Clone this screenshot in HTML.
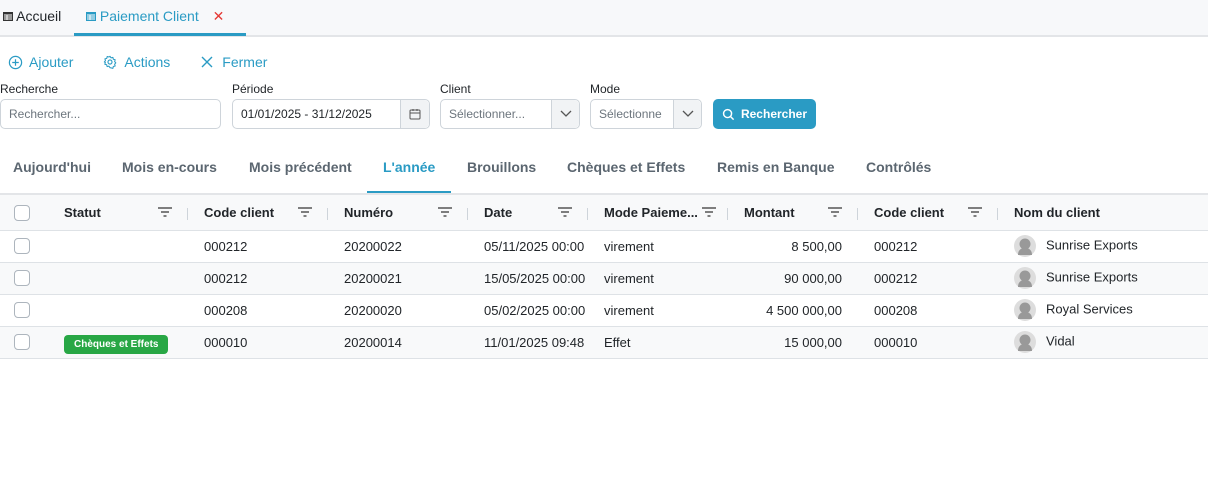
<!DOCTYPE html>
<html><head><meta charset="utf-8"><style>
*{box-sizing:border-box;margin:0;padding:0}
body{width:1208px;height:478px;background:#fff;font-family:"Liberation Sans",Arial,sans-serif;color:#212529;position:relative;overflow:hidden}
.abs{position:absolute}
.tabbar{left:0;top:0;width:1208px;height:37px;background:#f7f8fa;border-bottom:2px solid #e3e5e8}
.blue{color:#2a9bc4}
.lbl{font-size:12px;color:#212529}
.inp{height:30px;border:1px solid #ced4da;border-radius:5px;background:#fff;font-size:12px;display:flex;align-items:center;padding-left:8px;color:#6c757d}
.addon{position:absolute;top:0;right:0;height:28px;border-left:1px solid #ced4da;background:#f1f3f5;display:flex;align-items:center;justify-content:center;border-radius:0 5px 5px 0}
.tab2{font-size:14px;font-weight:bold;color:#5b6670;top:159px}
table{position:absolute;left:0;top:193px;width:1208px;border-collapse:collapse;font-family:"Liberation Sans",sans-serif;font-size:13px;white-space:nowrap}
th{height:36px;background:#f8f9fa;text-align:left;font-weight:bold;font-size:13px;border-bottom:1px solid #dee2e6;border-top:2px solid #e3e5e8;position:relative;padding-left:14px}
td{height:32px;border-bottom:1px solid #dee2e6;padding-left:14px;font-size:13px}
tr.alt td{background:#f8f9fa}
.cb{width:16px;height:16px;border:1px solid #adb5bd;border-radius:4px;background:#fff;display:inline-block;vertical-align:middle}
.f{position:absolute;right:18px;top:12px}
.sep{position:absolute;right:2px;top:13px;width:1px;height:12px;background:#ced4da}
.av{display:inline-block;width:22px;height:22px;vertical-align:middle;margin-right:10px}
.badge{background:#28a745;color:#fff;font-size:10px;font-weight:bold;padding:4px 10px;border-radius:4px}
</style></head><body>
<div class="abs tabbar"></div>
<div class="abs" style="left:3px;top:8px;font-size:14px">
<svg width="10" height="9" style="vertical-align:0"><rect x="0" y="0" width="10" height="9" fill="#333"/><path d="M1 3h8M1 5h8M1 7h8M4 3v5" stroke="#fff" stroke-width="1"/></svg> Accueil</div>
<div class="abs blue" style="left:86px;top:8px;font-size:14px">
<svg width="10" height="9" style="vertical-align:0"><rect x="0" y="0" width="10" height="9" fill="#2a9bc4"/><path d="M1 3h8M1 5h8M1 7h8M4 3v5" stroke="#fff" stroke-width="1"/></svg> Paiement Client <span style="color:#e53935;margin-left:10px">✕</span></div>
<div class="abs" style="left:74px;top:33px;width:172px;height:3px;background:#2a9bc4"></div>

<div class="abs blue" style="left:8px;top:54px;font-size:14px;display:flex;align-items:center">
<svg width="15" height="15" viewBox="0 0 16 16"><circle cx="8" cy="8" r="6.5" fill="none" stroke="#2a9bc4" stroke-width="1.3"/><path d="M8 4.5v7M4.5 8h7" stroke="#2a9bc4" stroke-width="1.3"/></svg><span style="margin-left:6px">Ajouter</span>
<svg style="margin-left:30px" width="14" height="14" viewBox="0 0 16 16"><circle cx="8" cy="8" r="2.3" fill="none" stroke="#2a9bc4" stroke-width="1.3"/><path d="M8 1.5l1.2 1.8 2.1-.6.5 2.1 2.1.6-.6 2.1 1.3 1.5-1.3 1.5.6 2.1-2.1.6-.5 2.1-2.1-.6L8 14.5l-1.2-1.8-2.1.6-.5-2.1-2.1-.6.6-2.1L1.5 8l1.3-1.5-.6-2.1 2.1-.6.5-2.1 2.1.6z" fill="none" stroke="#2a9bc4" stroke-width="1.2" stroke-linejoin="round"/></svg><span style="margin-left:7px">Actions</span>
<svg style="margin-left:30px" width="14" height="14" viewBox="0 0 14 14"><path d="M2 2l10 10M12 2L2 12" stroke="#2a9bc4" stroke-width="1.4"/></svg><span style="margin-left:8px">Fermer</span></div>

<div class="abs lbl" style="left:0;top:82px">Recherche</div>
<div class="abs lbl" style="left:232px;top:82px">Période</div>
<div class="abs lbl" style="left:440px;top:82px">Client</div>
<div class="abs lbl" style="left:590px;top:82px">Mode</div>
<div class="abs inp" style="left:0;top:99px;width:221px">Rechercher...</div>
<div class="abs inp" style="left:232px;top:99px;width:198px;color:#212529">01/01/2025 - 31/12/2025<div class="addon" style="width:29px"><svg width="12" height="12" viewBox="0 0 12 12"><rect x="1" y="2" width="10" height="9" rx="1" fill="none" stroke="#555"/><path d="M1 5h10M4 1v2M8 1v2" stroke="#555"/></svg></div></div>
<div class="abs inp" style="left:440px;top:99px;width:140px">Sélectionner...<div class="addon" style="width:28px"><svg width="12" height="8"><path d="M1 1l5 5 5-5" fill="none" stroke="#555" stroke-width="1.3"/></svg></div></div>
<div class="abs inp" style="left:590px;top:99px;width:112px">Sélectionne<div class="addon" style="width:28px"><svg width="12" height="8"><path d="M1 1l5 5 5-5" fill="none" stroke="#555" stroke-width="1.3"/></svg></div></div>
<div class="abs" style="left:713px;top:99px;width:103px;height:30px;background:#2a9bc4;border-radius:5px;color:#fff;font-size:12px;font-weight:bold;display:flex;align-items:center;justify-content:center">
<svg width="13" height="13" viewBox="0 0 14 14"><circle cx="6" cy="6" r="4.3" fill="none" stroke="#fff" stroke-width="1.6"/><path d="M9 9l3.5 3.5" stroke="#fff" stroke-width="1.6"/></svg><span style="margin-left:6px">Rechercher</span></div>

<div class="abs tab2" style="left:13px">Aujourd'hui</div>
<div class="abs tab2" style="left:122px">Mois en-cours</div>
<div class="abs tab2" style="left:249px">Mois précédent</div>
<div class="abs tab2" style="left:383px;color:#2a9bc4">L'année</div>
<div class="abs tab2" style="left:467px">Brouillons</div>
<div class="abs tab2" style="left:567px">Chèques et Effets</div>
<div class="abs tab2" style="left:717px">Remis en Banque</div>
<div class="abs tab2" style="left:866px">Contrôlés</div>
<div class="abs" style="left:367px;top:191px;width:84px;height:2px;background:#2a9bc4;z-index:2"></div>

<table>
<colgroup><col style="width:50px"><col style="width:140px"><col style="width:140px"><col style="width:140px"><col style="width:120px"><col style="width:140px"><col style="width:130px"><col style="width:140px"><col></colgroup>
<tr><th><span class="cb"></span></th>
<th>Statut<svg class="f" width="14" height="10"><path d="M0 1h14M3 5h8M5.5 9h3" stroke="#555" stroke-width="1.6"/></svg><span class="sep"></span></th>
<th>Code client<svg class="f" width="14" height="10"><path d="M0 1h14M3 5h8M5.5 9h3" stroke="#555" stroke-width="1.6"/></svg><span class="sep"></span></th>
<th>Numéro<svg class="f" width="14" height="10"><path d="M0 1h14M3 5h8M5.5 9h3" stroke="#555" stroke-width="1.6"/></svg><span class="sep"></span></th>
<th>Date<svg class="f" width="14" height="10"><path d="M0 1h14M3 5h8M5.5 9h3" stroke="#555" stroke-width="1.6"/></svg><span class="sep"></span></th>
<th>Mode Paieme...<svg class="f" style="right:14px" width="14" height="10"><path d="M0 1h14M3 5h8M5.5 9h3" stroke="#555" stroke-width="1.6"/></svg><span class="sep"></span></th>
<th>Montant<svg class="f" width="14" height="10"><path d="M0 1h14M3 5h8M5.5 9h3" stroke="#555" stroke-width="1.6"/></svg><span class="sep"></span></th>
<th>Code client<svg class="f" width="14" height="10"><path d="M0 1h14M3 5h8M5.5 9h3" stroke="#555" stroke-width="1.6"/></svg><span class="sep"></span></th>
<th>Nom du client</th></tr>
<tr><td><span class="cb"></span></td><td></td><td>000212</td><td>20200022</td><td>05/11/2025 00:00</td><td>virement</td><td style="text-align:right;padding-right:18px">8 500,00</td><td>000212</td><td><svg class="av" viewBox="0 0 22 22"><circle cx="11" cy="11" r="11" fill="#ddd"/><path d="M4 20c0-5 3-7 7-7s7 2 7 7z" fill="#999"/><circle cx="11" cy="9" r="5.5" fill="#999"/></svg>Sunrise Exports</td></tr>
<tr class="alt"><td><span class="cb"></span></td><td></td><td>000212</td><td>20200021</td><td>15/05/2025 00:00</td><td>virement</td><td style="text-align:right;padding-right:18px">90 000,00</td><td>000212</td><td><svg class="av" viewBox="0 0 22 22"><circle cx="11" cy="11" r="11" fill="#ddd"/><path d="M4 20c0-5 3-7 7-7s7 2 7 7z" fill="#999"/><circle cx="11" cy="9" r="5.5" fill="#999"/></svg>Sunrise Exports</td></tr>
<tr><td><span class="cb"></span></td><td></td><td>000208</td><td>20200020</td><td>05/02/2025 00:00</td><td>virement</td><td style="text-align:right;padding-right:18px">4 500 000,00</td><td>000208</td><td><svg class="av" viewBox="0 0 22 22"><circle cx="11" cy="11" r="11" fill="#ddd"/><path d="M4 20c0-5 3-7 7-7s7 2 7 7z" fill="#999"/><circle cx="11" cy="9" r="5.5" fill="#999"/></svg>Royal Services</td></tr>
<tr class="alt"><td><span class="cb"></span></td><td><span class="badge">Chèques et Effets</span></td><td>000010</td><td>20200014</td><td>11/01/2025 09:48</td><td>Effet</td><td style="text-align:right;padding-right:18px">15 000,00</td><td>000010</td><td><svg class="av" viewBox="0 0 22 22"><circle cx="11" cy="11" r="11" fill="#ddd"/><path d="M4 20c0-5 3-7 7-7s7 2 7 7z" fill="#999"/><circle cx="11" cy="9" r="5.5" fill="#999"/></svg>Vidal</td></tr>
</table>
</body></html>
